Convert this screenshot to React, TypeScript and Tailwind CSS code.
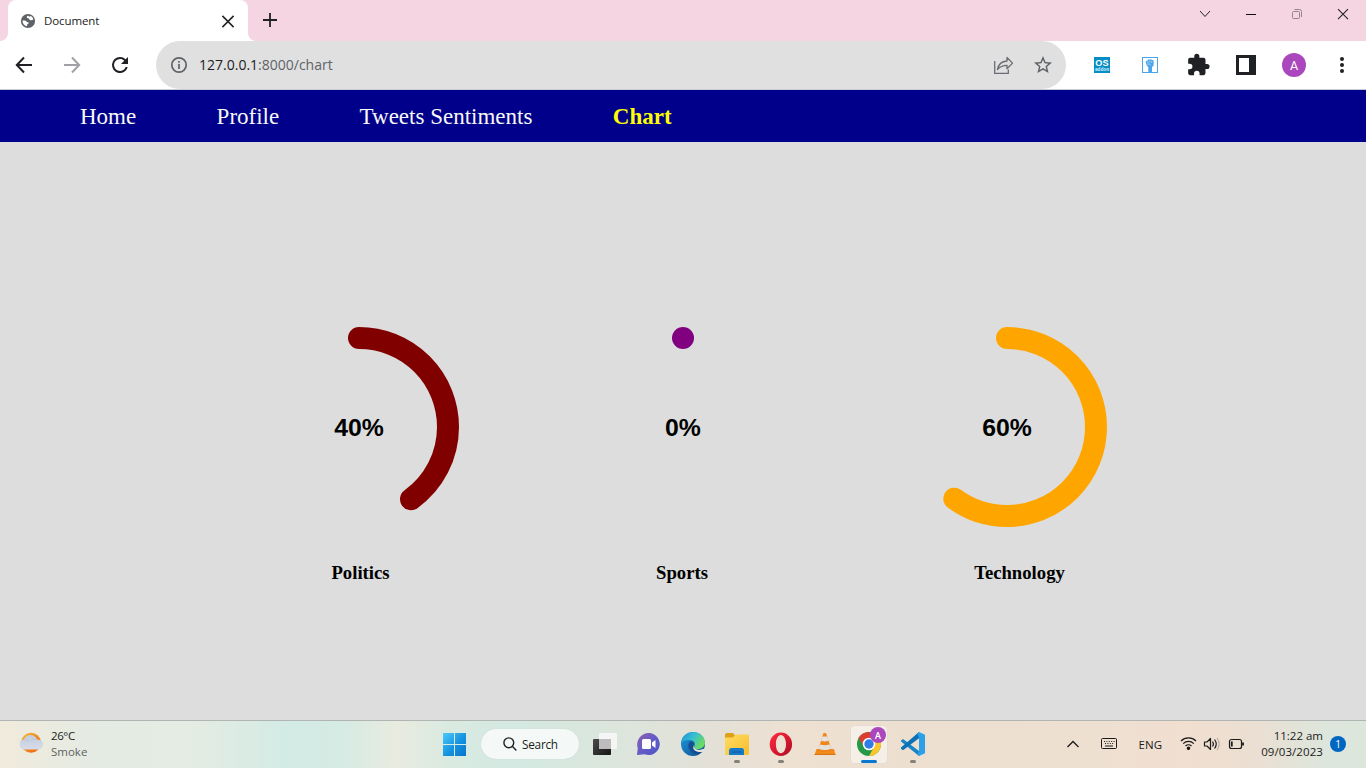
import type { ReactNode } from "react";

function TabStrip() {
  return (
    <div className="flex h-[41px] shrink-0 items-stretch bg-[#f6d5e3]">
      <div className="flex w-2 items-end bg-white">
        <div className="h-full w-2 rounded-br-lg bg-[#f6d5e3]" />
      </div>
      <div className="flex w-60 items-center rounded-t-lg bg-white pl-3">
        <svg className="size-4" viewBox="0 0 16 16">
          <circle cx="8" cy="8" r="7.1" fill="#5f6368" />
          <path d="M7.600 2.700C6.200 3.700 6.700 5 8.200 5.300c1.200.2.800 1.600 2 1.900 1.500.3 2.500-.3 3.100-.7-.3-1.700-1.400-2.900-2.700-3.500-.5.900-1.200.7-1.600.2-.4-.4-.900-.6-1.400-.5Z" fill="#fff" />
          <path d="M2.500 7.600c1.500-.3 3.300 0 4 .8.600.8 2.200.500 2.300 1.500.1.900-1.300.700-1.500 1.400-.2.700.1 1.300-.5 1.900C4.200 12.700 2.300 10.400 2.500 7.600Z" fill="#fff" />
        </svg>
        <span className="ml-2 w-[170px] font-['Open_Sans',sans-serif] text-[11.500px] tracking-[-0.1px] text-[#202124]">Document</span>
        <svg className="ml-1 size-5" viewBox="0 0 20 20" fill="none" stroke="#202124" strokeWidth="1.500">
          <path d="m4.400 4.900 11.200 11.200M15.600 4.900 4.400 16.100" />
        </svg>
      </div>
      <div className="flex w-2 bg-white">
        <div className="h-full w-2 rounded-bl-lg bg-[#f6d5e3]" />
      </div>
      <svg className="mt-[13px] ml-[7px] size-3.5" viewBox="0 0 14 14" stroke="#202124" strokeWidth="1.800">
        <path d="M7 0v14M0 7h14" />
      </svg>
      <div className="ml-auto flex pt-1">
        <svg className="h-5 w-[46px]" viewBox="0 0 46 20" fill="none" stroke="#222">
          <path d="m18 7 5 5.500L28 7" />
        </svg>
        <svg className="h-5 w-[46px]" viewBox="0 0 46 20" fill="none" stroke="#111">
          <path d="M18 10.500h10" />
        </svg>
        <svg className="h-5 w-[46px]" viewBox="0 0 46 20" fill="none" stroke="#96828c">
          <rect x="18.500" y="7.500" width="7" height="7" rx="1" />
          <path d="M20.500 5.500h5a2 2 0 0 1 2 2v5.500" />
        </svg>
        <svg className="h-5 w-[46px]" viewBox="0 0 46 20" fill="none" stroke="#222" strokeWidth="1.100">
          <path d="m18 5.200 10 10M28 5.200l-10 10" />
        </svg>
      </div>
    </div>
  );
}

function ToolIcon({ children }: { children: ReactNode }) {
  return (
    <svg className="size-12 shrink-0" viewBox="0 0 48 48">
      {children}
    </svg>
  );
}

function Toolbar() {
  return (
    <div className="flex h-[49px] shrink-0 items-start border-b border-[#c9ccd2] bg-white">
      <ToolIcon>
        <path d="M32 24H17M24 16.500 16.800 24l7.200 7.500" fill="none" stroke="#202124" strokeWidth="2" />
      </ToolIcon>
      <ToolIcon>
        <path d="M16 24h15M24 16.500l7.200 7.500-7.200 7.500" fill="none" stroke="#a0a1a4" strokeWidth="2" />
      </ToolIcon>
      <ToolIcon>
        <path transform="translate(12 12)" fill="#202124" d="M17.650 6.350A7.960 7.960 0 0 0 12 4a8 8 0 1 0 7.730 10h-2.080A6 6 0 1 1 12 6c1.660 0 3.140.690 4.220 1.780L13 11h7V4l-2.350 2.350Z" />
      </ToolIcon>
      <div className="ml-3 flex h-12 w-[910px] items-center rounded-full bg-[#e0e0e0] pl-3.5">
        <svg className="size-[18px]" viewBox="0 0 18 18" fill="none" stroke="#5f6368" strokeWidth="1.700">
          <circle cx="9" cy="9" r="7.200" />
          <path d="M9 8v5M9 5v1.800" />
        </svg>
        <span className="mb-0.5 ml-[11px] font-['Open_Sans',sans-serif] text-[14px] text-[#5f6368]">
          <span className="text-[#202124]">127.0.0.1</span>:8000/chart
        </span>
        <svg className="mr-[7px] ml-auto h-6 w-10" viewBox="0 0 40 24" fill="none" stroke="#6a6d71" strokeWidth="1.300">
          <path d="M10.700 8v12.300h13.600V16.500" />
          <path d="M23 4.500v3.500c-5.500.3-8.600 3.200-9.600 8.700 2.500-3.200 5.300-4.300 9.600-4.300v3.300l5.500-5.600L23 4.500Z" strokeLinejoin="round" />
        </svg>
        <svg className="mr-[11px] size-6" viewBox="0 0 24 24" fill="#5f6368">
          <path d="M22 9.240l-7.190-.62L12 2 9.190 8.630 2 9.240l5.460 4.730L5.820 21 12 17.270 18.180 21l-1.630-7.030L22 9.240ZM12 15.400l-3.760 2.270 1-4.280-3.320-2.880 4.380-.38L12 6.100l1.710 4.040 4.380.38-3.320 2.880 1 4.280L12 15.400Z" transform="translate(1.200 1.200) scale(.9)" />
        </svg>
      </div>
      <div className="ml-3 flex">
        <ToolIcon>
          <rect x="16" y="16" width="16" height="16" fill="#078dc5" />
          <text x="24" y="25" textAnchor="middle" fontFamily="Liberation Sans" fontWeight="700" fontSize="9.200" fill="#fff">OS</text>
          <text x="24" y="30" textAnchor="middle" fontFamily="Liberation Sans" fontWeight="700" fontSize="4.700" fill="#d4f1ff">addon</text>
        </ToolIcon>
        <ToolIcon>
          <rect x="16.500" y="16.500" width="15" height="15" fill="#fff" stroke="#4aa5ec" />
          <path d="M19.800 21.200c-.1-1.100.9-1.700 1.700-1.400.1-1.200 1.400-1.700 2.100-1 .6-.9 2-.7 2.200.3 1-.4 1.900.3 1.900 1.300v2.600c0 1.500-.6 2.500-1.700 3v5h-3.700v-5c-1-.5-1.600-1.200-1.900-2.400l-.6-2.400Z" fill="#4aa5ec" />
          <path d="M21.800 20.400v1.800M23.900 19.500v2.200M25.800 20v2M21 23.200l2.500-.3 1 1.500" fill="none" stroke="#d9eefc" strokeWidth=".6" />
        </ToolIcon>
        <ToolIcon>
          <path transform="translate(12.100 11.700) scale(1.020)" fill="#202124" d="M20.500 11H19V7c0-1.100-.9-2-2-2h-4V3.500a2.500 2.500 0 0 0-5 0V5H4c-1.100 0-1.990.9-1.990 2v3.800H3.500a2.700 2.700 0 0 1 0 5.400H2V20c0 1.100.9 2 2 2h3.800v-1.500a2.700 2.700 0 0 1 5.400 0V22H17c1.100 0 2-.9 2-2v-4h1.500a2.500 2.500 0 0 0 0-5Z" />
        </ToolIcon>
        <ToolIcon>
          <path fillRule="evenodd" fill="#202124" d="M14 14h20v20H14V14Zm3 3v14h10V17H17Z" />
        </ToolIcon>
        <ToolIcon>
          <circle cx="24" cy="24" r="12" fill="#aa47bc" />
          <text x="24" y="28.500" textAnchor="middle" fontFamily="Roboto" fontSize="12.500" fill="#fff">A</text>
        </ToolIcon>
        <ToolIcon>
          <g fill="#202124">
            <circle cx="24" cy="18" r="2" />
            <circle cx="24" cy="24" r="2" />
            <circle cx="24" cy="30" r="2" />
          </g>
        </ToolIcon>
      </div>
    </div>
  );
}

function SiteNav() {
  return (
    <nav className="flex h-[52px] shrink-0 items-center gap-[80.400px] bg-[#00008b] px-20 pt-0.5 font-['Liberation_Serif',serif] text-[23px] whitespace-nowrap text-[#f8f8f4]">
      <a>Home</a>
      <a>Profile</a>
      <a>Tweets Sentiments</a>
      <a className="font-bold text-[#ffff00]">Chart</a>
    </nav>
  );
}

const RADIUS = 89;
const LENGTH = 2 * Math.PI * RADIUS;

const gauges = [
  { label: "Politics", value: 40, color: "#800000", indent: "pl-[3px]" },
  { label: "Sports", value: 0, color: "#800080", indent: "pr-[2px]" },
  { label: "Technology", value: 60, color: "#ffa500", indent: "pl-[25px]" },
];

function Gauge({ label, value, color, indent }: { label: string; value: number; color: string; indent: string }) {
  return (
    <div className="flex w-[324px] flex-col items-center">
      <svg className="h-[200px] w-[200px]" viewBox="0 0 200 200">
        <circle
          cx="100"
          cy="100"
          r={RADIUS}
          fill="none"
          stroke={color}
          strokeWidth="22"
          strokeLinecap="round"
          strokeDasharray={`${(LENGTH * value) / 100 + 0.01} ${LENGTH}`}
          transform="rotate(-90 100 100)"
        />
        <text x="100" y="109" textAnchor="middle" fontFamily="Liberation Sans" fontWeight="700" fontSize="24.800">
          {value}%
        </text>
      </svg>
      <h3 className={`mt-[35px] font-['Liberation_Serif',serif] text-[18.700px] leading-[22px] font-bold text-black ${indent}`}>{label}</h3>
    </div>
  );
}

function TaskItem({ children, running }: { children: ReactNode; running?: boolean }) {
  return (
    <svg className="h-[47px] w-11 shrink-0" viewBox="0 0 44 47">
      {children}
      {running && <rect x="20" y="39" width="6" height="3" rx="1.500" fill="#858078" />}
    </svg>
  );
}

function Taskbar() {
  return (
    <footer className="flex h-12 shrink-0 border-t border-[#b0b5b3] bg-[linear-gradient(90deg,#f0ebdc_0%,#e3ebe4_8%,#e4ece3_14%,#d3ebe5_21%,#d5ebe4_25%,#e9ebdf_29%,#d9eae1_33%,#d3e9e1_38%,#dde5dc_46%,#e3e0d7_52%,#eee1d1_58%,#ecdfd0_66%,#eee0d1_80%,#f1dfd0_87%,#eadfd2_92%,#dde6dc_97%,#dce7dc_100%)] font-['Open_Sans',sans-serif] text-[#1b1b1b]">
      <div className="flex w-[432px] pl-[19px]">
        <svg className="mt-[11px] h-[22px] w-6" viewBox="0 0 24 22">
          <defs>
            <linearGradient id="cloud" x2="0" y2="1">
              <stop stopColor="#c3cbdd" />
              <stop offset="1" stopColor="#d6dce8" />
            </linearGradient>
            <linearGradient id="sun" x2="1" y2="1">
              <stop stopColor="#f4bc35" />
              <stop offset=".8" stopColor="#f06d12" />
            </linearGradient>
          </defs>
          <circle cx="12" cy="10.700" r="10" fill="url(#sun)" />
          <path d="M5.300 17.500a5.200 5.200 0 0 1-.2-10.300C6 4.500 8.500 3 11.300 3c3.300 0 5.800 1.800 6.700 4.500 3.500-.2 6 2 6 5 0 2.800-2.200 5-5 5Z" fill="url(#cloud)" />
          <path d="M4 8.500c2.500-1.300 5.500-.8 7 1.500M12 9c1.500-1.500 4-2 6-1.300" fill="none" stroke="#b5bfd4" strokeWidth=".6" />
        </svg>
        <div className="ml-2 pt-[7px] text-[11.500px] leading-4">
          <div className="tracking-[-0.4px]">26°C</div>
          <div className="text-[#5c625e]">Smoke</div>
        </div>
      </div>
      <TaskItem>
        <defs>
          <linearGradient id="win" x2="1" y2="1">
            <stop stopColor="#4dcafb" />
            <stop offset=".55" stopColor="#1493e0" />
            <stop offset="1" stopColor="#0873cd" />
          </linearGradient>
        </defs>
        <path d="M11 12h11v11H11ZM23 12h11v11H23ZM11 24h11v11H11ZM23 24h11v11H23Z" fill="url(#win)" />
      </TaskItem>
      <div className="mt-2 mr-[3px] ml-[5px] flex h-[30px] w-[98px] items-center rounded-full bg-[#f4f9f7] pl-[21px] shadow-[0_0_1px_#b8c8c4]">
        <svg className="size-4" viewBox="0 0 16 16" fill="none" stroke="#202020" strokeWidth="1.400">
          <circle cx="6.800" cy="6.800" r="4.900" />
          <path d="m10.300 10.300 4 4.200" />
        </svg>
        <span className="mt-0.5 ml-1 text-[11.800px] tracking-[-0.25px]">Search</span>
      </div>
      <TaskItem>
        <defs>
          <linearGradient id="tv" x2="1" y2="1">
            <stop stopColor="#4b4b4b" />
            <stop offset="1" stopColor="#151515" />
          </linearGradient>
        </defs>
        <rect x="11" y="18" width="18" height="16" rx="1" fill="url(#tv)" />
        <rect x="17" y="12" width="18" height="16" rx="1" fill="#f5f5f5" />
        <path d="M17 18h12v10H17Z" fill="#bdbdbd" />
      </TaskItem>
      <TaskItem>
        <defs>
          <linearGradient id="chat" x2="1" y2="1">
            <stop stopColor="#8b62ae" />
            <stop offset=".5" stopColor="#655bc6" />
            <stop offset="1" stopColor="#4b55c7" />
          </linearGradient>
        </defs>
        <path d="M23 12a11 11 0 1 1-4.400 21.200L11 34l.8-6.700A11.500 11.500 0 0 1 23 12Z" fill="url(#chat)" />
        <rect x="16" y="18" width="9" height="10" rx="1.500" fill="#fff" />
        <path d="m26 21.500 3.500-2.500v8L26 24.500Z" fill="#fff" />
      </TaskItem>
      <TaskItem>
        <defs>
          <linearGradient id="edgeTop" x2="1" y2=".5">
            <stop stopColor="#1b8ccc" />
            <stop offset=".5" stopColor="#35bdd7" />
            <stop offset="1" stopColor="#6bdc62" />
          </linearGradient>
          <linearGradient id="edgeLow" x2="1" y2="1">
            <stop stopColor="#1d9de1" />
            <stop offset="1" stopColor="#114a8b" />
          </linearGradient>
        </defs>
        <circle cx="23" cy="23" r="12" fill="url(#edgeLow)" />
        <path d="M11 22C12 15 17 11 23 11c7 0 12 5 12 10.500 0 4-3.200 6.500-7 6.500-2.800 0-4.500-1.200-3.800-2.600 1.600-2.400.3-5.900-4.200-6.400-4-.3-7.500 1-9 3Z" fill="url(#edgeTop)" />
        <path d="M19.500 21c-2 3-1.200 7.500 2.500 10.500 3.500 2.600 8 2 11-1.500-3.500 1.500-10 .5-9.500-4 .2-2 .8-3 .5-4-1-1.300-3-1.800-4.500-1Z" fill="#154f91" />
        <path d="M23.900 23.500c-1.500 4.800 5.600 6.800 9.500 4.300l1.600 1-1.800 1.900c-4.500 1.100-10.200-.5-10-4.700Z" fill="#e7e4dc" />
      </TaskItem>
      <TaskItem running>
        <defs>
          <linearGradient id="folder" x2="1" y2="1">
            <stop stopColor="#ffdc62" />
            <stop offset="1" stopColor="#f8bd2d" />
          </linearGradient>
        </defs>
        <path d="M11 14q0-2 2-2h6l2.500 3H32v7H11Z" fill="#dda019" />
        <path d="M11 16.500h8l2.500-3H34q1 0 1 1V33q0 1-1 1H12q-1 0-1-1Z" fill="url(#folder)" />
        <path d="M15 34v-4.500q0-2.500 2.500-2.500h10Q30 27 30 29.500V34Z" fill="#167ac7" />
        <path d="M18 31h9" stroke="#0b589d" strokeLinecap="round" />
      </TaskItem>
      <TaskItem running>
        <defs>
          <linearGradient id="opera" x2="1" y2="1">
            <stop stopColor="#ff3040" />
            <stop offset=".5" stopColor="#db1930" />
            <stop offset="1" stopColor="#a90d26" />
          </linearGradient>
        </defs>
        <path fillRule="evenodd" d="M22.900 11.500a11.200 11.700 0 1 1 0 23.400 11.200 11.700 0 0 1 0-23.400Zm0 2.600c-2.800 0-5 4-5 9.200s2.200 9 5 9 5.100-4 5.100-9-2.300-9.200-5.100-9.200Z" fill="url(#opera)" />
      </TaskItem>
      <TaskItem>
        <path d="M14.500 28h17.500l1.500 6h-21Z" fill="#f18a1b" />
        <path d="M21.500 12h2.500l5.800 17.500q-6.800 3-13.800 0Z" fill="#ef851b" />
        <path d="M20.400 15.500h4.800l1.500 4.300q-3.800 1.400-7.700 0ZM18 23.500q4.800 1.400 9.700 0l1.500 4.200q-6.500 2.400-12.800 0Z" fill="#e3e2df" />
        <path d="M12.500 33.500h21" stroke="#d97511" />
      </TaskItem>
      <TaskItem>
        <rect x="4.500" y="4.500" width="37" height="38" rx="4" fill="#f6efe7" stroke="#e6dcd1" />
        <g transform="translate(1 0)">
          <circle cx="22" cy="23" r="12" fill="#249a48" />
          <path d="M11.600 17A12 12 0 0 1 32.400 17L22 18.500 17 26Z" fill="#dd3c31" />
          <path d="M22 17h10.400A12 12 0 0 1 22 35l5-9Z" fill="#f9c72b" />
          <circle cx="22" cy="23" r="6.300" fill="#fff" />
          <circle cx="22" cy="23" r="4.700" fill="#317de5" />
          <circle cx="31" cy="14" r="8" fill="#aa47bc" />
          <text x="31" y="17.500" textAnchor="middle" fontFamily="Roboto" fontSize="9.500" fontWeight="500" fill="#fff">A</text>
          <rect x="14" y="39" width="16" height="3" rx="1.500" fill="#0878d2" />
        </g>
      </TaskItem>
      <TaskItem running>
        <path d="m13 18 16 12v5L11 20.500v-1Z" fill="#1685c7" />
        <path d="m13 29.300 16-12V11L11 26.500v1.200Z" fill="#0b72b7" />
        <path d="M29 11l6 2.700v18.600L29 35l-1.500-1.500 1.500-3.500V17l-1.500-4.500Z" fill="#2b9fe8" />
      </TaskItem>
      <div className="ml-auto flex">
        <svg className="mt-[9px] mr-[18px] h-7 w-[56px]" viewBox="0 0 56 28" fill="none" stroke="#1b1b1b">
          <path d="m2.500 17 5.500-5.500 5.500 5.500" strokeWidth="1.300" />
          <rect x="36.500" y="8.500" width="15" height="10" rx="1" />
          <path d="M39 11.500h11M40 13.500h9" strokeDasharray="1 1.400" />
          <path d="M40 16h8" />
        </svg>
        <span className="mt-[15px] text-[11.500px] leading-[17px]">ENG</span>
        <svg className="mt-[11px] ml-[18px] h-6 w-[66px]" viewBox="0 0 66 24" fill="none" stroke="#1b1b1b" strokeWidth="1.200">
          <path d="M1 9a10.500 10.500 0 0 1 15 0M3.200 11.600a7.500 7.500 0 0 1 10.600 0M5.500 14a4.300 4.300 0 0 1 6 0" />
          <circle cx="8.500" cy="16.300" r="1.200" fill="#1b1b1b" />
          <path d="M24.500 10H27l3.500-3.500v11L27 14h-2.500Z" strokeLinejoin="round" />
          <path d="M32.500 9.500q1.800 2.500 0 5M34.500 7.500q3.500 4.500 0 9" />
          <path d="M37 6q4.500 6 0 12" stroke="#b7aba0" />
          <rect x="49.500" y="7.500" width="12" height="9" rx="2" />
          <path d="M51.800 9.500v5M63 10.500v3" strokeWidth="1.800" />
        </svg>
        <div className="ml-[7px] w-[70px] pt-[7px] text-right text-[11.500px] leading-4 whitespace-nowrap">
          <div>11:22 am</div>
          <div className="tracking-[0.080px]">09/03/2023</div>
        </div>
        <div className="mt-[15px] mr-5 ml-[7px] flex size-4 items-center justify-center rounded-full bg-[#0067c0] text-[10px] leading-4 text-white">1</div>
      </div>
    </footer>
  );
}

export default function App() {
  return (
    <div className="flex h-[768px] w-[1366px] flex-col overflow-hidden bg-[#dddddd]">
      <TabStrip />
      <Toolbar />
      <SiteNav />
      <main className="flex flex-1 pt-[185px] pl-[197px]">
        {gauges.map((g) => (
          <Gauge key={g.label} {...g} />
        ))}
      </main>
      <Taskbar />
    </div>
  );
}
